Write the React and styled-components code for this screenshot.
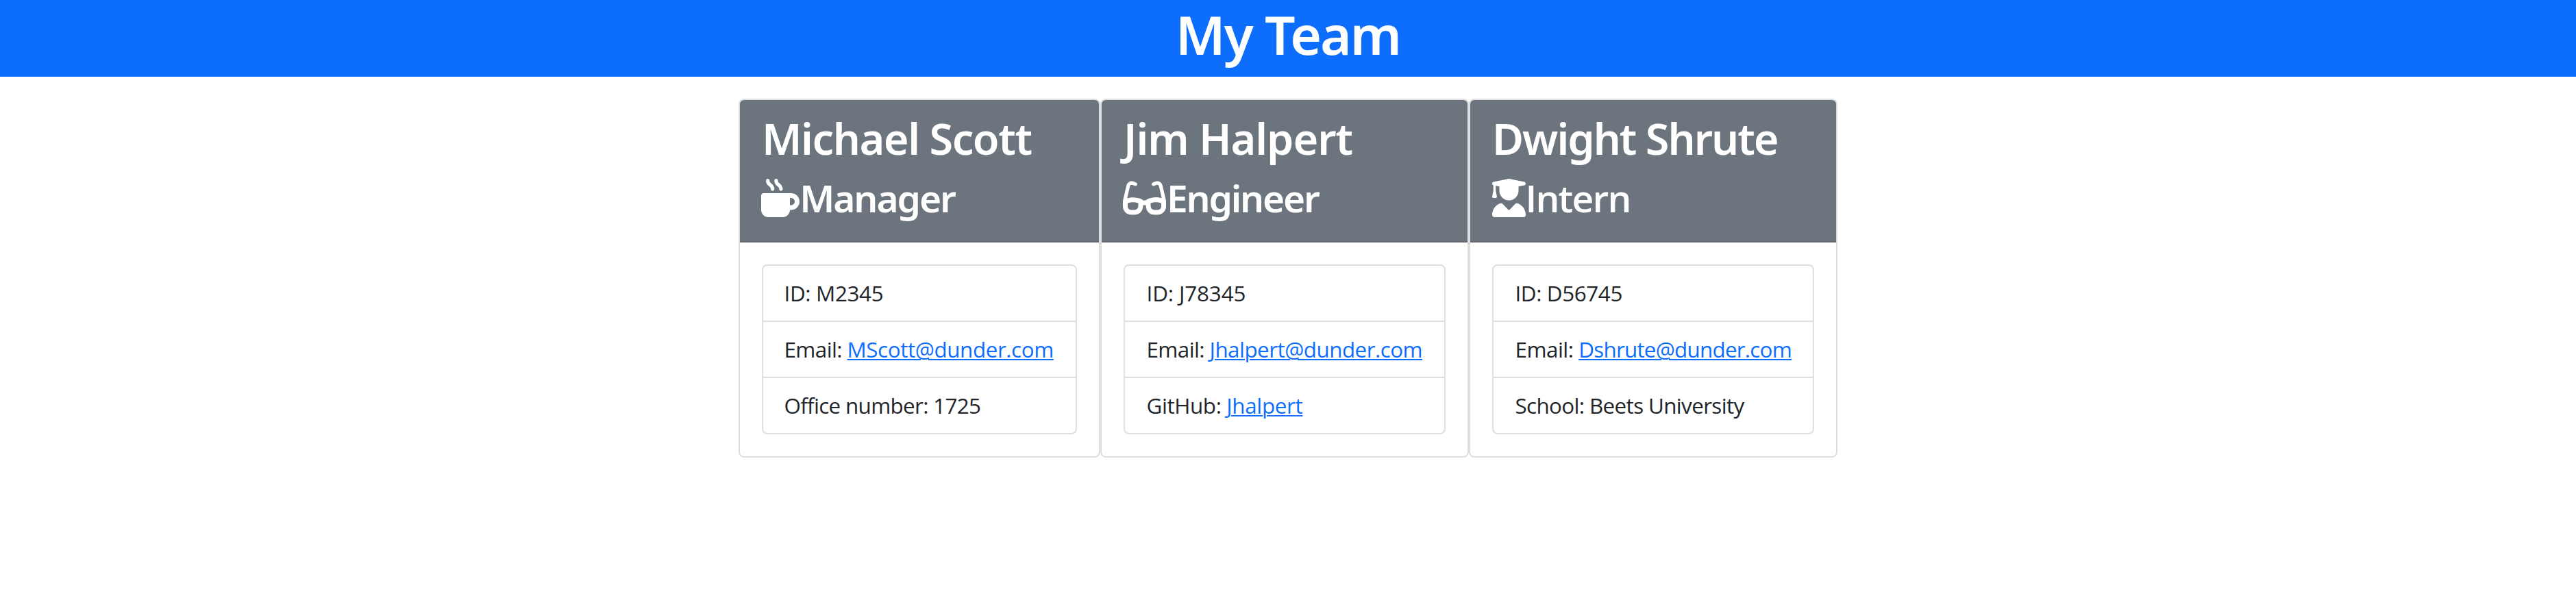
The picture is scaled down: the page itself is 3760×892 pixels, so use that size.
import React from "react";
import styled, { createGlobalStyle } from "styled-components";
import { FaMugHot, FaGlasses, FaUserGraduate } from "react-icons/fa6";

const OPEN = '"Open Sans", "Noto Sans", sans-serif';
const NOTO = '"Noto Sans", "Open Sans", sans-serif';

const GlobalStyle = createGlobalStyle`
  *, *::before, *::after { box-sizing: border-box; }
  body {
    margin: 0;
    background: #fff;
    color: #212529;
    font-family: ${OPEN};
    font-size: 31.4px;
  }
`;

const Banner = styled.header`
  height: 112px;
  background: #0d6efd;
  color: #fff;
  text-align: center;
`;

const Title = styled.h1`
  margin: 0;
  font-family: ${NOTO};
  font-size: 78.4px;
  font-weight: 600;
  line-height: 99px;
  letter-spacing: -2px;
`;

const Team = styled.main`
  display: flex;
  justify-content: center;
  padding-top: 32px;
`;

const Card = styled.section`
  width: ${(p) => p.$width}px;
  height: 524px;
  border: 2px solid #dfdfdf;
  border-radius: 8px;
  overflow: hidden;
`;

const CardHeader = styled.div`
  height: 208px;
  padding: 16px 32px;
  background: #6c757d;
  border-bottom: 2px solid #5f666d;
  color: #fff;
`;

const Name = styled.h2`
  margin: 0 0 14px;
  font-family: ${NOTO};
  font-size: 63px;
  font-weight: 600;
  line-height: 79px;
  letter-spacing: ${(p) => p.$spacing}px;
  white-space: nowrap;
`;

const Role = styled.h3`
  display: flex;
  align-items: center;
  height: 68px;
  margin: 0 0 0 ${(p) => p.$shift}px;
  font-family: ${(p) => p.$face};
  font-size: 55px;
  font-weight: 600;
  line-height: 68px;
  letter-spacing: ${(p) => p.$spacing}px;

  svg {
    flex: none;
    width: ${(p) => p.$iconWidth}px;
    height: 56px;
    margin-right: ${(p) => p.$iconGap}px;
  }
`;

const CardBody = styled.div`
  padding: 32px;
`;

const List = styled.ul`
  margin: 0;
  padding: 0;
  list-style: none;
  border: 2px solid #dfdfdf;
  border-radius: 8px;
`;

const Item = styled.li`
  height: 80px;
  padding-left: ${(p) => p.$indent}px;
  line-height: 80px;
  white-space: pre;

  & + & {
    height: 82px;
    border-top: 2px solid #dfdfdf;
  }
`;

const Label = styled.span`
  letter-spacing: ${(p) => p.$spacing}px;
`;

const Link = styled.a`
  color: #0d6efd;
  letter-spacing: ${(p) => p.$spacing}px;
  text-decoration: underline;
  text-decoration-thickness: 2px;
  text-underline-offset: 2px;
`;

const team = [
  {
    name: "Michael Scott", nameSpacing: -1.45, width: 528, indent: 30.5,
    role: "Manager", roleSpacing: -2.05, roleFace: NOTO, shift: -1.5, iconWidth: 56, iconGap: 0.7, Icon: FaMugHot,
    items: [
      { text: "ID: M2345", spacing: -0.35 },
      { text: "Email: ", spacing: -0.6, link: "MScott@dunder.com", href: "mailto:MScott@dunder.com", linkSpacing: -0.42 },
      { text: "Office number: 1725", spacing: -0.68 },
    ],
  },
  {
    name: "Jim Halpert", nameSpacing: -1.05, width: 538, indent: 31.5,
    role: "Engineer", roleSpacing: -2.19, roleFace: NOTO, shift: -0.7, iconWidth: 63, iconGap: 0.7, Icon: FaGlasses,
    items: [
      { text: "ID: J78345", spacing: -0.13 },
      { text: "Email: ", spacing: -0.6, link: "Jhalpert@dunder.com", href: "mailto:Jhalpert@dunder.com", linkSpacing: -0.53 },
      { text: "GitHub: ", spacing: -0.4, link: "Jhalpert", href: "#", linkSpacing: -0.35 },
    ],
  },
  {
    name: "Dwight Shrute", nameSpacing: -2, width: 538, indent: 31.5,
    role: "Intern", roleSpacing: -1.8, roleFace: OPEN, shift: 0, iconWidth: 49, iconGap: -0.5, Icon: FaUserGraduate,
    items: [
      { text: "ID: D56745", spacing: -0.4 },
      { text: "Email: ", spacing: -0.5, link: "Dshrute@dunder.com", href: "mailto:Dshrute@dunder.com", linkSpacing: -0.77 },
      { text: "School: Beets University", spacing: -0.64 },
    ],
  },
];

export default function App() {
  return (
    <>
      <GlobalStyle />
      <Banner>
        <Title>My Team</Title>
      </Banner>
      <Team>
        {team.map(({ Icon, ...m }) => (
          <Card key={m.name} $width={m.width}>
            <CardHeader>
              <Name $spacing={m.nameSpacing}>{m.name}</Name>
              <Role
                $face={m.roleFace}
                $spacing={m.roleSpacing}
                $shift={m.shift}
                $iconWidth={m.iconWidth}
                $iconGap={m.iconGap}
              >
                <Icon />
                {m.role}
              </Role>
            </CardHeader>
            <CardBody>
              <List>
                {m.items.map((item) => (
                  <Item key={item.text} $indent={m.indent}>
                    <Label $spacing={item.spacing}>{item.text}</Label>
                    {item.link && (
                      <Link href={item.href} $spacing={item.linkSpacing}>{item.link}</Link>
                    )}
                  </Item>
                ))}
              </List>
            </CardBody>
          </Card>
        ))}
      </Team>
    </>
  );
}
